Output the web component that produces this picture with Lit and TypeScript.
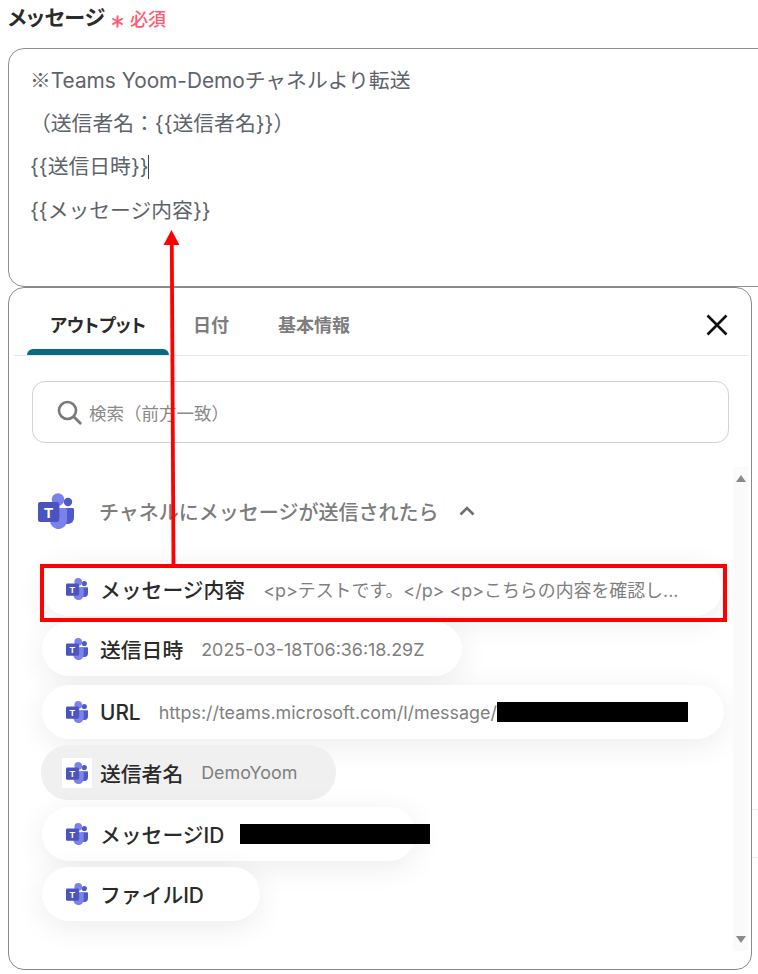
import { LitElement, html, css, svg } from "lit";
import { customElement } from "lit/decorators.js";

const teams = (big = false) => html`<svg class=${big ? "logo big" : "logo"} viewBox="0 0 36 36" aria-hidden="true">
  ${svg`
  <circle cx="30" cy="9" r="4.200" fill="#5059c9"/>
  <path d="M24 15h10.600a1.400 1.400 0 0 1 1.400 1.400v8.600a6 6 0 0 1-6 6h-6z" fill="#5059c9"/>
  <circle cx="20" cy="6.500" r="6.300" fill="#7b83eb"/>
  <path d="M12 15h15.400a1.600 1.600 0 0 1 1.600 1.600v11a8.500 8.500 0 0 1-17 0z" fill="#7b83eb"/>
  <path d="M12 11h8a2 2 0 0 1 2 2v13H12z" fill="#5059c9" opacity=".45"/>
  <rect x="0" y="9" width="21" height="20" rx="2" fill="#4b53bc"/>
  <text x="10.500" y="24.500" text-anchor="middle" font-family="Liberation Sans, sans-serif" font-weight="700" font-size="15" fill="#fff">T</text>
  `}
</svg>`;

@customElement("app-root")
export class AppRoot extends LitElement {
  static styles = css`
    :host {
      display: block;
      position: relative;
      width: 758px;
      height: 974px;
      overflow: hidden;
      background: #fff;
      font-family: Inter, "Noto Sans CJK JP", sans-serif;
    }
    .page { padding: 0 0 0 8px; display: flex; flex-direction: column; }
    .label {
      height: 48px;
      display: flex;
      align-items: flex-start;
      padding-top: 5px;
      box-sizing: border-box;
      gap: 6px;
      font-size: 21px;
      line-height: 26px;
      font-weight: 700;
      color: #2b2b2b;
      font-feature-settings: "palt";
    }
    .req { display: flex; align-items: center; gap: 6px; color: #ff5a70; font-size: 18px; font-weight: 500; height: 30px; font-feature-settings: normal; }
    .star { width: 13px; height: 13px; display: block; margin-top: 3px; }
    .editor {
      box-sizing: border-box;
      width: 780px;
      height: 239px;
      border: 1px solid #8f8f8f;
      border-radius: 16px;
      padding: 9px 21px;
      font-size: 20.800px;
      color: #5d636b;
      line-height: 43.500px;
    }
    .editor div { white-space: pre; height: 43.500px; }
    .mark { font-family: "Noto Sans CJK JP", sans-serif; }
    .caret { display: inline-block; width: 1px; height: 24px; background: #444; vertical-align: -5px; margin-left: -1px; }
    .panel {
      box-sizing: border-box;
      width: 744px;
      height: 683px;
      border: 1px solid #8a8a8a;
      border-radius: 16px;
      background: #fff;
      display: flex;
      flex-direction: column;
    }
    .tabs {
      height: 67px;
      margin: 0 3px 0 5px;
      border-bottom: 1px solid #e7e7e7;
      display: flex;
      align-items: stretch;
      flex: none;
    }
    .tab {
      display: flex;
      align-items: center;
      justify-content: center;
      font-size: 18px;
      font-weight: 700;
      color: #7d7d7d;
      padding-top: 5px;
      box-sizing: border-box;
    }
    .tab.on {
      width: 142px;
      margin-left: 13px;
      color: #2a2a2a;
      flex-direction: column;
      padding-top: 0;
      font-feature-settings: "palt";
    }
    .tab.on span { flex: 1; display: flex; align-items: center; padding-top: 11px; }
    .bar { height: 6px; width: 100%; flex: none; background: #0a6a84; border-radius: 6px 6px 0 0; }
    .tab.d { margin-left: 24px; }
    .tab.k { margin-left: 49px; }
    .close { margin-left: auto; margin-right: 19px; align-self: center; margin-top: 6px; width: 24px; height: 24px; display: block; }
    .search {
      flex: none;
      box-sizing: border-box;
      margin: 25px 22px 0 23px;
      height: 62px;
      border: 1px solid #d3d3d3;
      border-radius: 13px;
      display: flex;
      align-items: center;
      padding-left: 23px;
      gap: 6px;
      color: #8a8a8a;
      font-size: 17.500px;
    }
    .search svg { width: 27px; height: 27px; display: block; }
    .body { flex: 1; min-height: 0; display: flex; }
    .list { flex: 1; min-width: 0; padding: 50px 0 0 33px; display: flex; flex-direction: column; align-items: flex-start; }
    .group {
      display: flex;
      align-items: center;
      height: 36px;
      margin: 0 0 33px -4px;
      font-size: 20px;
      font-weight: 500;
      color: #7c7c7c;
      gap: 25px;
    }
    .group .chev { width: 18px; height: 12px; margin-left: -5px; display: block; }
    .pill {
      box-sizing: border-box;
      height: 54px;
      border-radius: 27px;
      background: #fff;
      box-shadow: 0 6px 30px rgba(0, 0, 0, 0.08);
      display: flex;
      align-items: center;
      padding-left: 24px;
      font-size: 20.800px;
      font-weight: 500;
      color: #2a2a2a;
      white-space: nowrap;
      flex: none;
    }
    .pill .val { font-size: 17.900px; font-weight: 400; color: #7f7f7f; }
    .logo { width: 22px; height: 22px; display: block; flex: none; margin-right: 12px; }
    .logo.big { width: 36px; height: 36px; margin: 0; }
    .mask { display: inline-block; height: 20px; background: #000; flex: none; }
    .p1 { width: 680px; }
    .p2 { width: 420px; margin-top: 6px; }
    .p3 { width: 682px; margin-top: 9px; }
    .p4 { width: 295px; margin: 6px 0 0 -1px; background: #f0f0f0; box-shadow: none; height: 55px; padding-left: 21px; }
    .p4 .tile { background: #fff; width: 30px; height: 30px; display: flex; align-items: center; justify-content: center; margin-right: 8px; flex: none; }
    .p4 .tile .logo { margin: 0; }
    .p5 { width: 374px; margin-top: 7px; }
    .p6 { width: 218px; margin-top: 6px; }
    .k1 { margin-right: 18px; }
    .k2 { margin-right: 18px; }
    .k3 { margin-right: 18px; }
    .k5 { margin-right: 16px; }
    .scroll {
      width: 15px;
      flex: none;
      margin: 24px 3px 18px 0;
      background: #fafafa;
      display: flex;
      flex-direction: column;
      justify-content: space-between;
      align-items: center;
      padding: 8px 0;
      box-sizing: border-box;
    }
    .tri { width: 10px; height: 7px; display: block; }
    .side { position: absolute; left: 752px; width: 6px; height: 1px; background: #ececec; }
    .overlay { position: absolute; left: 0; top: 0; width: 758px; height: 974px; pointer-events: none; }
  `;

  render() {
    return html`
      <div class="page">
        <div class="label">
          <span>メッセージ</span>
          <span class="req">
            <svg class="star" viewBox="0 0 13 13"><path d="M6.500 0.500v12M1.300 3.500l10.400 6M11.700 3.500l-10.400 6" stroke="#ff5a70" stroke-width="2" fill="none"/></svg>
            <span>必須</span>
          </span>
        </div>
        <div class="editor">
          <div><span class="mark">※</span>Teams Yoom-Demoチャネルより転送</div>
          <div>（送信者名：{{送信者名}}）</div>
          <div>{{送信日時}}<span class="caret"></span></div>
          <div>{{メッセージ内容}}</div>
        </div>
        <div class="panel">
          <div class="tabs">
            <div class="tab on"><span>アウトプット</span><div class="bar"></div></div>
            <div class="tab d">日付</div>
            <div class="tab k">基本情報</div>
            <svg class="close" viewBox="0 0 24 24"><path d="M2.500 2.500l19 19M21.500 2.500l-19 19" stroke="#111" stroke-width="2.600" fill="none"/></svg>
          </div>
          <div class="search">
            <svg viewBox="0 0 27 27"><circle cx="11.500" cy="11.500" r="8.500" fill="none" stroke="#7a7a7a" stroke-width="2.600"/><path d="M17.800 17.800l6.500 6.500" stroke="#7a7a7a" stroke-width="2.800" stroke-linecap="round"/></svg>
            <span>検索（前方一致）</span>
          </div>
          <div class="body">
            <div class="list">
              <div class="group">
                ${teams(true)}
                <span>チャネルにメッセージが送信されたら</span>
                <svg class="chev" viewBox="0 0 18 12"><path d="M2.500 9.500L9 3l6.500 6.500" fill="none" stroke="#6f6f6f" stroke-width="2.600"/></svg>
              </div>
              <div class="pill p1">${teams()}<span class="k1">メッセージ内容</span><span class="val">&lt;p&gt;テストです。&lt;/p&gt; &lt;p&gt;こちらの内容を確認し...</span></div>
              <div class="pill p2">${teams()}<span class="k2">送信日時</span><span class="val">2025-03-18T06:36:18.29Z</span></div>
              <div class="pill p3">${teams()}<span class="k3">URL</span><span class="val">https://teams.microsoft.com/l/message/</span><span class="mask" style="width:191px"></span></div>
              <div class="pill p4"><span class="tile">${teams()}</span><span class="k2">送信者名</span><span class="val">DemoYoom</span></div>
              <div class="pill p5">${teams()}<span class="k5">メッセージID</span><span class="mask" style="width:190px"></span></div>
              <div class="pill p6">${teams()}<span>ファイルID</span></div>
            </div>
            <div class="scroll">
              <svg class="tri" viewBox="0 0 10 7"><path d="M5 0l5 7H0z" fill="#8a8a8a"/></svg>
              <svg class="tri" viewBox="0 0 10 7"><path d="M0 0h10L5 7z" fill="#8a8a8a"/></svg>
            </div>
          </div>
        </div>
      </div>
      <div class="side" style="top:809px"></div>
      <div class="side" style="top:857px"></div>
      <svg class="overlay" viewBox="0 0 758 974">
        <rect x="42" y="566" width="683" height="54" fill="none" stroke="#f00" stroke-width="4"/>
        <path d="M173.500 565L171.800 243" stroke="#f00" stroke-width="3.800" fill="none"/>
        <path d="M171.500 230l8 15h-16z" fill="#f00"/>
      </svg>
    `;
  }
}
